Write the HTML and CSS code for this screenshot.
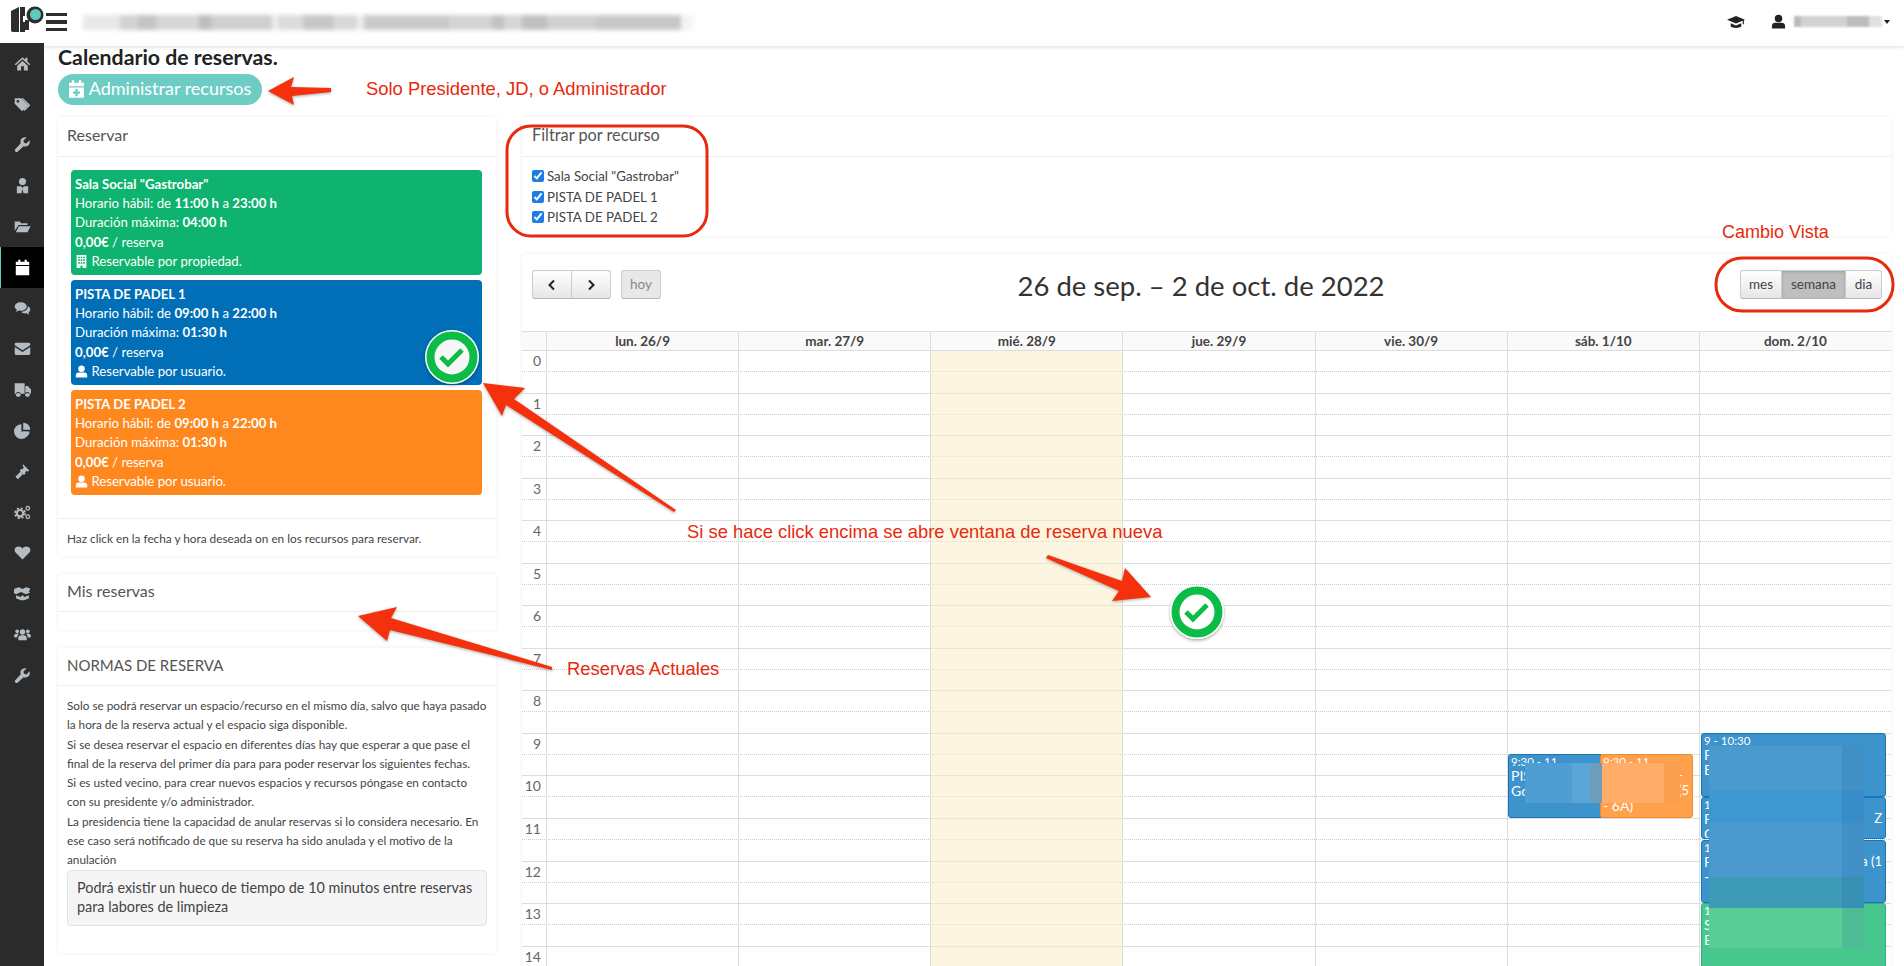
FILE: index.html
```html
<!DOCTYPE html>
<html lang="es">
<head>
    <meta charset="UTF-8">
    <meta name="viewport" content="width=device-width, initial-scale=1.0">
    <title>Calendario de reservas</title>
    <link rel="stylesheet" href="styles.css">
</head>
<body>
    <svg class="sprite" width="0" height="0">
        <symbol id="i-home" viewBox="0 0 24 24"><path d="M12 3 1 13l1.500 1.500L12 6l9.500 8.500L23 13l-4-3.600V4h-3v2.700zM4.500 15v7H10v-6h4v6h5.500v-7L12 8.300z"/></symbol>
        <symbol id="i-tags" viewBox="0 0 24 24"><path fill-rule="evenodd" d="M1 3h9l10 10-8.500 8.500L1 11zm4.500 2.500a2 2 0 1 0 0 4 2 2 0 0 0 0-4z"/><path d="M13 3l10 10-8 8-1.500-1.500 6.500-6.500L10.500 3z"/></symbol>
        <symbol id="i-wrench" viewBox="0 0 24 24"><path d="M22 6l-4.500 4.500-3.300-.8-.9-3.300L17.800 2C14.500 1 11.500 2.200 10 4.500 8.800 6.300 8.800 8.600 9.600 10.400L2 18.500c-1 1.100-1 2.500 0 3.500s2.500 1 3.500 0l8-7.600c1.800.8 4.200.6 6-.6C22 12.200 23 9 22 6z"/></symbol>
        <symbol id="i-usertie" viewBox="0 0 24 24"><circle cx="12" cy="6.500" r="5"/><path d="M4 13h6l2 2.500 2-2.500h6v10h-6.500L12 17l-1.500 6H4z"/></symbol>
        <symbol id="i-folder" viewBox="0 0 24 24"><path d="M1 5h7l2 2.500h9V10H6.500L1 18zM7 11.500h16.500L19 20H2.500z"/></symbol>
        <symbol id="i-calendar" viewBox="0 0 24 24"><path d="M6 1h3v3h6V1h3v3h3.500v4.500h-19V4H6zM2.500 10h19v13h-19z"/></symbol>
        <symbol id="i-comments" viewBox="0 0 24 24"><path d="M9.500 3C4.800 3 1 5.700 1 9c0 1.900 1.200 3.500 3 4.600L3 17l4-2.200c.8.100 1.600.2 2.500.2 4.700 0 8.500-2.700 8.500-6s-3.800-6-8.500-6z"/><path d="M19.500 8.500c.1.200.1.400.1.600 0 4-4.100 7.300-9.600 7.500 1.300 1.400 3.500 2.400 6 2.400.6 0 1.200-.1 1.800-.2l3.700 2-.9-3.300c1.500-1 2.400-2.400 2.400-4 0-2-1.400-3.900-3.500-5z"/></symbol>
        <symbol id="i-envelope" viewBox="0 0 24 24"><path d="M3 4h18a2 2 0 0 1 2 2v1.500l-11 7-11-7V6a2 2 0 0 1 2-2zM1 10l11 7 11-7v9a2 2 0 0 1-2 2H3a2 2 0 0 1-2-2z"/></symbol>
        <symbol id="i-truck" viewBox="0 0 24 24"><path fill-rule="evenodd" d="M1 3h14v15H1zM16 7h3.500L24 12v6h-8zM6 15.500a3.500 3.500 0 1 0 0 7 3.500 3.500 0 0 0 0-7zm13 0a3.500 3.500 0 1 0 0 7 3.500 3.500 0 0 0 0-7z"/><circle cx="6" cy="19" r="2.200"/><circle cx="19" cy="19" r="2.200"/></symbol>
        <symbol id="i-pie" viewBox="0 0 24 24"><path d="M10.500 3v10.500H21A10.500 10.500 0 1 1 10.500 3zM13 1a10 10 0 0 1 10 10H13zM12.800 13l9.300.4a10 10 0 0 1-3 6.600z"/></symbol>
        <symbol id="i-gavel" viewBox="0 0 24 24"><path d="M12.500 1.500l9 9-2 2-1.500-1.500-2.500 2.500 1 1-2.500 2.500-6-6L10.500 8l1 1L14 6.500 12.500 5zM9 12.500l3.500 3.500-7 7L2 19.500z"/></symbol>
        <symbol id="i-cogs" viewBox="0 0 24 24"><circle cx="8.500" cy="13" r="4.500" fill="none" stroke="#b4bcc2" stroke-width="3"/><circle cx="8.500" cy="13" r="7" fill="none" stroke="#b4bcc2" stroke-width="2.500" stroke-dasharray="3 2.500"/><circle cx="19.500" cy="6" r="2.500" fill="none" stroke="#b4bcc2" stroke-width="1.800"/><circle cx="19.500" cy="18" r="2.500" fill="none" stroke="#b4bcc2" stroke-width="1.800"/></symbol>
        <symbol id="i-heart" viewBox="0 0 24 24"><path d="M12 22 2.500 12.500C-.5 9.500.500 4 6 3.500c2.500-.2 4.700 1.200 6 3 1.300-1.800 3.500-3.200 6-3 5.500.5 6.500 6 3.500 9z"/></symbol>
        <symbol id="i-box" viewBox="0 0 24 24"><path d="M1 5l6-2 5 2.500L17 3l6 2-2 4.500 2 1-6 2.500-7-3-7 3-6-2.500 2-1zM3 14.500l6.500 2.500 2.500-3 2.500 3 6.500-2.500V19l-7 2.500h-4L3 19z"/></symbol>
        <symbol id="i-users" viewBox="0 0 24 24"><circle cx="12" cy="8.500" r="3.800"/><circle cx="4.500" cy="7.500" r="2.600"/><circle cx="19.500" cy="7.500" r="2.600"/><path d="M6 20v-3c0-2.500 2-4 4-4h4c2 0 4 1.500 4 4v3zM0 15c0-2 1-4 3-4h3c.4 0 .7.100 1 .2-1.500 1-2.500 2.800-2.500 5H1.500zM24 15c0-2-1-4-3-4h-3c-.4 0-.7.100-1 .2 1.500 1 2.500 2.800 2.500 5h3z"/></symbol>
        <symbol id="i-user" viewBox="0 0 24 24"><circle cx="12" cy="7" r="6"/><path d="M1.500 23v-4c0-3 2.500-5 5-5h11c2.500 0 5 2 5 5v4z"/></symbol>
        <symbol id="i-building" viewBox="0 0 24 24"><path fill-rule="evenodd" d="M3 0h18v24h-7v-4h-4v4H3zM6 3v3h3V3zm4.500 0v3h3V3zM15 3v3h3V3zM6 8v3h3V8zm4.500 0v3h3V8zM15 8v3h3V8zM6 13v3h3v-3zm4.500 0v3h3v-3zm4.500 0v3h3v-3z"/></symbol>
        <symbol id="i-cap" viewBox="0 0 24 24"><path d="M12 4 0 9l12 5 9-3.800V15h1.500V9.500L24 9zM5 13.500V18c2 2.500 12 2.500 14 0v-4.500L12 16.500z"/></symbol>
    </svg>

    <header class="topbar">
        <div class="logo">
            <svg width="36" height="27" viewBox="0 0 36 27">
                <path fill="#2d2d2d" d="M1 5l8-4v25H3c-1.500 0-2-1-2-2z"/>
                <path fill="#2d2d2d" d="M10 1h5v9h-2v6h2v10h-5z"/>
                <path fill="#2d2d2d" d="M15 14h4v10h-4z"/>
                <circle fill="#2d2d2d" cx="25" cy="9" r="8.500"/>
                <circle fill="#5fc8c0" cx="25.500" cy="8.500" r="5.500"/>
            </svg>
        </div>
        <div class="hamburger"><span></span><span></span><span></span></div>
        <div class="blur-title"></div>
        <div class="topbar-right">
            <svg class="top-icon cap"><use href="#i-cap"/></svg>
            <svg class="top-icon person"><use href="#i-user"/></svg>
            <div class="blur-name"></div>
            <span class="caret"></span>
        </div>
    </header>

    <div class="layout">
        <aside class="sidebar">
            <a class="side-item" href="#"><svg><use href="#i-home"/></svg></a>
            <a class="side-item" href="#"><svg><use href="#i-tags"/></svg></a>
            <a class="side-item" href="#"><svg><use href="#i-wrench"/></svg></a>
            <a class="side-item" href="#"><svg><use href="#i-usertie"/></svg></a>
            <a class="side-item" href="#"><svg><use href="#i-folder"/></svg></a>
            <a class="side-item active" href="#"><svg><use href="#i-calendar"/></svg></a>
            <a class="side-item" href="#"><svg><use href="#i-comments"/></svg></a>
            <a class="side-item" href="#"><svg><use href="#i-envelope"/></svg></a>
            <a class="side-item" href="#"><svg><use href="#i-truck"/></svg></a>
            <a class="side-item" href="#"><svg><use href="#i-pie"/></svg></a>
            <a class="side-item" href="#"><svg><use href="#i-gavel"/></svg></a>
            <a class="side-item" href="#"><svg><use href="#i-cogs"/></svg></a>
            <a class="side-item" href="#"><svg><use href="#i-heart"/></svg></a>
            <a class="side-item" href="#"><svg><use href="#i-box"/></svg></a>
            <a class="side-item" href="#"><svg><use href="#i-users"/></svg></a>
            <a class="side-item" href="#"><svg><use href="#i-wrench"/></svg></a>
        </aside>

        <main class="content">
            <h1 class="page-title">Calendario de reservas.</h1>
            <a class="btn-resources" href="#">
                <svg viewBox="0 0 24 24"><use href="#i-calendar"/><path class="plus" d="M10.500 12h3v3h3v3h-3v3h-3v-3h-3v-3h3z"/></svg>
                Administrar recursos
            </a>

            <div class="columns">
                <div class="col-left">
                    <section class="panel">
                        <div class="panel-head tall">Reservar</div>
                        <div class="resources">
                            <div class="resource green">
                                <strong>Sala Social "Gastrobar"</strong>
                                <div>Horario hábil: de <strong>11:00 h</strong> a <strong>23:00 h</strong></div>
                                <div>Duración máxima: <strong>04:00 h</strong></div>
                                <div><strong>0,00€</strong> / reserva</div>
                                <div><svg><use href="#i-building"/></svg> Reservable por propiedad.</div>
                            </div>
                            <div class="resource blue">
                                <strong>PISTA DE PADEL 1</strong>
                                <div>Horario hábil: de <strong>09:00 h</strong> a <strong>22:00 h</strong></div>
                                <div>Duración máxima: <strong>01:30 h</strong></div>
                                <div><strong>0,00€</strong> / reserva</div>
                                <div><svg><use href="#i-user"/></svg> Reservable por usuario.</div>
                            </div>
                            <div class="resource orange">
                                <strong>PISTA DE PADEL 2</strong>
                                <div>Horario hábil: de <strong>09:00 h</strong> a <strong>22:00 h</strong></div>
                                <div>Duración máxima: <strong>01:30 h</strong></div>
                                <div><strong>0,00€</strong> / reserva</div>
                                <div><svg><use href="#i-user"/></svg> Reservable por usuario.</div>
                            </div>
                        </div>
                        <div class="panel-foot">Haz click en la fecha y hora deseada on en los recursos para reservar.</div>
                    </section>

                    <section class="panel">
                        <div class="panel-head">Mis reservas</div>
                        <div class="empty-body"></div>
                    </section>

                    <section class="panel">
                        <div class="panel-head caps">NORMAS DE RESERVA</div>
                        <div class="rules">
                            <p>Solo se podrá reservar un espacio/recurso en el mismo día, salvo que haya pasado la hora de la reserva actual y el espacio siga disponible.</p>
                            <p>Si se desea reservar el espacio en diferentes días hay que esperar a que pase el final de la reserva del primer día para para poder reservar los siguientes fechas.</p>
                            <p>Si es usted vecino, para crear nuevos espacios y recursos póngase en contacto con su presidente y/o administrador.</p>
                            <p>La presidencia tiene la capacidad de anular reservas si lo considera necesario. En ese caso será notificado de que su reserva ha sido anulada y el motivo de la anulación</p>
                            <div class="well">Podrá existir un hueco de tiempo de 10 minutos entre reservas para labores de limpieza</div>
                        </div>
                    </section>
                </div>

                <div class="col-right">
                    <section class="panel">
                        <div class="panel-head tall">Filtrar por recurso</div>
                        <div class="filters">
                            <label><input type="checkbox" checked> Sala Social "Gastrobar"</label>
                            <label><input type="checkbox" checked> PISTA DE PADEL 1</label>
                            <label><input type="checkbox" checked> PISTA DE PADEL 2</label>
                        </div>
                    </section>

                    <section class="panel calendar">
                        <div class="cal-toolbar">
                            <div class="cal-left">
                                <div class="btn-group">
                                    <button class="cal-btn arrow"><svg viewBox="0 0 12 12"><path d="M8 1.500 3.500 6 8 10.500"/></svg></button>
                                    <button class="cal-btn arrow"><svg viewBox="0 0 12 12"><path d="M4 1.500 8.500 6 4 10.500"/></svg></button>
                                </div>
                                <button class="cal-btn today-btn">hoy</button>
                            </div>
                            <h2 class="cal-title">26 de sep. – 2 de oct. de 2022</h2>
                            <div class="btn-group">
                                <button class="cal-btn view-month">mes</button>
                                <button class="cal-btn view-week pressed">semana</button>
                                <button class="cal-btn view-day">dia</button>
                            </div>
                        </div>

                        <div class="cal-head">
                            <div></div>
                            <div>lun. 26/9</div>
                            <div>mar. 27/9</div>
                            <div>mié. 28/9</div>
                            <div>jue. 29/9</div>
                            <div>vie. 30/9</div>
                            <div>sáb. 1/10</div>
                            <div>dom. 2/10</div>
                        </div>

                        <div class="cal-body">
                            <div class="cal-hour"><span>0</span></div>
                            <div class="cal-hour"><span>1</span></div>
                            <div class="cal-hour"><span>2</span></div>
                            <div class="cal-hour"><span>3</span></div>
                            <div class="cal-hour"><span>4</span></div>
                            <div class="cal-hour"><span>5</span></div>
                            <div class="cal-hour"><span>6</span></div>
                            <div class="cal-hour"><span>7</span></div>
                            <div class="cal-hour"><span>8</span></div>
                            <div class="cal-hour"><span>9</span></div>
                            <div class="cal-hour"><span>10</span></div>
                            <div class="cal-hour"><span>11</span></div>
                            <div class="cal-hour"><span>12</span></div>
                            <div class="cal-hour"><span>13</span></div>
                            <div class="cal-hour"><span>14</span></div>

                            <div class="cal-cols">
                                <div class="cal-col"></div>
                                <div class="cal-col"></div>
                                <div class="cal-col today"></div>
                                <div class="cal-col"></div>
                                <div class="cal-col"></div>
                                <div class="cal-col"></div>
                                <div class="cal-col"></div>
                            </div>

                            <div class="event ev-sat-blue"><small>9:30 - 11</small>PIS<br>Go</div>
                            <div class="event ev-sat-orange"><small>9:30 - 11</small><span class="ev-right">-<br>(5</span><br><br>- 6A)</div>
                            <div class="event ev-sun-1"><small>9 - 10:30</small>P<br>E</div>
                            <div class="event ev-sun-2"><small>10</small>P<span class="ev-right">Z</span><br>C</div>
                            <div class="event ev-sun-3"><small>11</small>P<span class="ev-right">a (1</span><br>-</div>
                            <div class="event ev-sun-4"><small>13</small>S<br>B</div>
                            <div class="mosaic mosaic-sat"></div>
                            <div class="mosaic mosaic-sun"></div>
                        </div>
                    </section>
                </div>
            </div>
        </main>
    </div>

    <!-- anotaciones encima de la captura -->
    <div class="annotations">
        <svg class="marks" width="1904" height="966" viewBox="0 0 1904 966">
            <defs>
                <filter id="soft" x="-20%" y="-20%" width="140%" height="140%">
                    <feDropShadow dx="0" dy="1.500" stdDeviation="1.500" flood-color="#000" flood-opacity=".35"/>
                </filter>
            </defs>
            <rect class="ring" x="507" y="126" width="200" height="110" rx="24"/>
            <rect class="ring" x="1716" y="258" width="177" height="53" rx="26"/>

            <polygon class="arrow-shape" points="268,91 294,77 291,87 331,88 331,92 292,96 294,105"/>
            <polygon class="arrow-shape" points="483,383 525,388 514,399 676,510 674,512 506,405 502,416"/>
            <polygon class="arrow-shape" points="358,616 397,607 391,618 552,667 552,670 390,630 387,641"/>
            <polygon class="arrow-shape" points="1048,555 1122,581 1125,568 1151,597 1112,601 1119,591 1046,558"/>

            <g class="check" transform="translate(452 357)">
                <circle r="27" fill="#fff" filter="url(#soft)"/>
                <circle r="21.500" fill="#f6f8f8" stroke="#0cbc46" stroke-width="8"/>
                <path d="M-11 0l7 7 14-14" fill="none" stroke="#0cbc46" stroke-width="5"/>
            </g>
            <g class="check" transform="translate(1197 612)">
                <circle r="27" fill="#fff" filter="url(#soft)"/>
                <circle r="21.500" fill="#fff" stroke="#0cbc46" stroke-width="8"/>
                <path d="M-11 0l7 7 14-14" fill="none" stroke="#0cbc46" stroke-width="5"/>
            </g>
        </svg>
        <div class="note note-admin">Solo Presidente, JD, o Administrador</div>
        <div class="note note-view">Cambio Vista</div>
        <div class="note note-click">Si se hace click encima se abre ventana de reserva nueva</div>
        <div class="note note-current">Reservas Actuales</div>
    </div>
</body>
</html>
```

FILE: styles.css
```css
/* Base */
html, body {
    height: 966px;
    overflow: hidden;
}

body {
    margin: 0;
    position: relative;
    background-color: #fff;
    color: #444;
    font-family: Lato, "Open Sans", sans-serif;
    font-size: 14px;
}

.sprite {
    position: absolute;
}

/* Barra superior */
.topbar {
    height: 46px;
    display: flex;
    align-items: center;
    background-color: #fff;
    box-shadow: 0 1px 4px rgba(0, 0, 0, 0.14);
    position: relative;
    z-index: 2;
}

.logo {
    margin-left: 10px;
    width: 36px;
    height: 27px;
    margin-top: -7px;
}

.hamburger {
    width: 21px;
    display: flex;
    flex-direction: column;
    gap: 4px;
    margin-top: -2px;
}

.hamburger span {
    height: 3.500px;
    background-color: #2d2d2d;
}

.blur-title {
    width: 610px;
    height: 15px;
    margin-left: 16px;
    margin-top: -1px;
    filter: blur(2px);
    background:
        linear-gradient(90deg, #e8e8e8 0 6%, #d2d2d2 6% 9%, #c4c4c4 9% 12%, #d6d6d6 12% 19%, #bdbdbd 19% 21%, #cfcfcf 21% 31%, #eeeeee 31% 32%, #dcdcdc 32% 36%, #c6c6c6 36% 41%, #d8d8d8 41% 45%, #ededed 45% 46%, #cacaca 46% 60%, #d4d4d4 60% 67%, #c2c2c2 67% 69%, #d6d6d6 69% 72%, #c0c0c0 72% 76%, #d0d0d0 76% 84%, #c8c8c8 84% 98%, #f4f4f4 98% 100%);
}

.topbar-right {
    margin-left: auto;
    display: flex;
    align-items: center;
    padding-right: 14px;
    margin-top: -3px;
}

.top-icon {
    fill: #222;
}

.top-icon.cap {
    width: 18px;
    height: 18px;
    margin-right: 26px;
}

.top-icon.person {
    width: 15px;
    height: 15px;
    margin-right: 8px;
}

.blur-name {
    width: 88px;
    height: 11px;
    filter: blur(1px);
    background: linear-gradient(90deg, #bbb 0 8%, #d2d2d2 8% 60%, #bdbdbd 60% 85%, #e0e0e0 85% 100%);
}

.caret {
    margin-left: 2px;
    border-left: 3.500px solid transparent;
    border-right: 3.500px solid transparent;
    border-top: 4px solid #222;
}

/* Estructura */
.layout {
    display: flex;
    align-items: stretch;
    margin-top: -3px;
}

.sidebar {
    width: 44px;
    flex: none;
    height: 923px;
    background-color: #2b2b2b;
    display: flex;
    flex-direction: column;
    position: relative;
    z-index: 3;
}

.side-item {
    height: 40.800px;
    flex: none;
    display: flex;
    align-items: center;
    justify-content: center;
    fill: #b4bcc2;
}

.side-item svg {
    width: 17px;
    height: 17px;
}

.side-item.active {
    background-color: #000;
    fill: #fff;
    box-shadow: inset 1px 0 0 #5fc8c0;
}

.content {
    flex: 1;
    min-width: 0;
    padding: 2px 13px 0 14px;
}

.page-title {
    margin: 0;
    height: 29px;
    line-height: 24px;
    font-size: 21.300px;
    font-weight: 700;
    color: #222;
}

.btn-resources {
    box-sizing: border-box;
    width: 204px;
    height: 31px;
    padding: 0 2px 3px 0;
    display: flex;
    align-items: center;
    justify-content: center;
    gap: 3px;
    border-radius: 16px;
    background-color: #6dcdc5;
    color: #fff;
    font-size: 18px;
    text-decoration: none;
}

.btn-resources svg {
    width: 19px;
    height: 20px;
    margin-top: 2px;
    fill: #fff;
}

.btn-resources .plus {
    fill: #6dcdc5;
}

.columns {
    display: grid;
    grid-template-columns: 438px 1fr;
    column-gap: 26px;
    margin-top: 12px;
}

/* Paneles */
.panel {
    background-color: #fff;
    border-radius: 3px;
    box-shadow: 0 0 5px rgba(0, 0, 0, 0.07);
    margin-bottom: 18px;
}

.panel-head {
    box-sizing: border-box;
    height: 38px;
    line-height: 34px;
    padding-left: 9px;
    border-bottom: 1px solid #eee;
    font-size: 16px;
    color: #555;
}

.panel-head.tall {
    height: 40px;
    line-height: 36px;
}

.col-right .panel-head {
    padding-left: 10px;
    font-size: 16.300px;
}

.panel-head.caps {
    font-size: 15px;
}

/* Recursos */
.resources {
    display: flex;
    flex-direction: column;
    gap: 5px;
    padding: 13px 14px 23px 13px;
    border-bottom: 1px solid #eee;
}

.resource {
    box-sizing: border-box;
    height: 105px;
    padding: 5px 4px 3px;
    border-radius: 4px;
    color: #fff;
    line-height: 19.200px;
    font-size: 13.200px;
}

.resource svg {
    width: 13px;
    height: 13px;
    fill: #fff;
    vertical-align: -2px;
}

.green {
    background-color: #0db36e;
}

.blue {
    background-color: #006fb8;
}

.orange {
    background-color: #ff881e;
}

.panel-foot {
    height: 37px;
    line-height: 39px;
    padding-left: 9px;
    font-size: 11.800px;
    color: #444;
}

.empty-body {
    height: 18px;
}

/* Normas */
.rules {
    padding: 10px 9px 27px;
    font-size: 11.750px;
    line-height: 19.300px;
    color: #444;
}

.rules p {
    margin: 0;
}

.well {
    padding: 7px 9px 9px;
    background-color: #f5f5f5;
    border: 1px solid #e3e3e3;
    border-radius: 4px;
    font-size: 14.400px;
    line-height: 19px;
}

/* Filtro */
.filters {
    padding: 9px 10px 8.500px;
    font-size: 13.300px;
}

.filters label {
    display: flex;
    align-items: center;
    gap: 3px;
    height: 20.500px;
}

.filters input {
    margin: 0;
    width: 12px;
    height: 12px;
    accent-color: #1a7ee6;
}

/* Calendario */
.calendar {
    padding-top: 16px;
    margin-bottom: 0;
}

.cal-toolbar {
    display: flex;
    justify-content: space-between;
    align-items: center;
    height: 29px;
    padding: 0 9px 0 11px;
    margin-bottom: 32px;
}

.cal-left {
    display: flex;
    gap: 11px;
}

.btn-group {
    display: flex;
}

.cal-btn {
    height: 29px;
    padding: 0 0 2px;
    border: 1px solid #ccc;
    border-bottom-color: #b5b5b5;
    margin-left: -1px;
    background: linear-gradient(#fff, #e6e6e6);
    color: #444;
    font-family: inherit;
    font-size: 13.500px;
}

.btn-group .cal-btn:first-child {
    border-radius: 3px 0 0 3px;
}

.btn-group .cal-btn:last-child {
    border-radius: 0 3px 3px 0;
}

.cal-btn.arrow {
    width: 40px;
    padding: 0;
    display: flex;
    align-items: center;
    justify-content: center;
}

.cal-btn.arrow svg {
    width: 12px;
    height: 12px;
    fill: none;
    stroke: #222;
    stroke-width: 2;
}

.today-btn {
    width: 40px;
    border-radius: 3px;
    background: #e8e8e8;
    color: #888;
}

.view-month {
    width: 42px;
}

.view-week {
    width: 65px;
}

.view-day {
    width: 37px;
}

.cal-btn.pressed {
    background: #bfbfbf;
    box-shadow: inset 0 1px 3px rgba(0, 0, 0, 0.18);
}

.cal-title {
    margin: 2px 0 0;
    font-size: 27.500px;
    font-weight: 400;
    color: #333;
}

.cal-head {
    display: grid;
    grid-template-columns: 24px repeat(7, 1fr);
    height: 18px;
    border-top: 1px solid #ddd;
    border-bottom: 1px solid #ddd;
    background-color: #fafafa;
    line-height: 18px;
    text-align: center;
    font-size: 13.500px;
    font-weight: 700;
    color: #444;
}

.cal-head div + div {
    border-left: 1px solid #ddd;
}

.cal-body {
    position: relative;
}

.cal-hour {
    position: relative;
    box-sizing: border-box;
    height: 42.550px;
    border-bottom: 1px solid #ddd;
}

.cal-hour span {
    display: block;
    width: 19px;
    text-align: right;
    line-height: 19px;
    font-size: 14px;
    color: #666;
}

.cal-hour::after {
    content: "";
    position: absolute;
    left: 0;
    right: 0;
    top: 20px;
    border-top: 1px dotted #ccc;
}

.cal-cols {
    position: absolute;
    top: 0;
    bottom: 0;
    left: 24px;
    right: 0;
    display: grid;
    grid-template-columns: repeat(7, 1fr);
}

.cal-col {
    border-left: 1px solid #ddd;
}

.cal-col.today {
    background-color: rgba(250, 238, 200, 0.55);
}

/* Eventos */
.event {
    position: absolute;
    box-sizing: border-box;
    overflow: hidden;
    padding: 0 2px;
    border: 1px solid #1a76b5;
    border-radius: 3px;
    background-color: #3d93cc;
    color: #fff;
    font-size: 14px;
    line-height: 15px;
}

.event small {
    display: block;
    font-size: 11.500px;
    line-height: 13px;
}

.ev-right {
    position: absolute;
    right: 3px;
    font-size: 13px;
}

.ev-sat-blue {
    left: 986px;
    top: 403px;
    width: 95px;
    height: 64px;
}

.ev-sat-orange {
    left: 1078px;
    top: 403px;
    width: 93px;
    height: 64px;
    background-color: #ffa04d;
    border-color: #f08a30;
}

.ev-sun-1 {
    left: 1179px;
    top: 382px;
    width: 185px;
    height: 64px;
}

.ev-sun-2 {
    left: 1179px;
    top: 446px;
    width: 185px;
    height: 42px;
}

.ev-sun-3 {
    left: 1179px;
    top: 489px;
    width: 185px;
    height: 63px;
}

.ev-sun-4 {
    left: 1179px;
    top: 552px;
    width: 185px;
    height: 80px;
    background-color: #47c78e;
    border-color: #2eaf75;
}

/* Zonas pixeladas */
.mosaic-sat {
    position: absolute;
    left: 1003px;
    top: 412px;
    width: 155px;
    height: 40px;
    background: linear-gradient(90deg, #4f9dd2 0 30%, #5aa6d8 30% 42%, #6d9dbb 42% 50%, #ffad68 50% 90%, #f9a04f 90% 100%);
}

.mosaic-sun {
    position: absolute;
    left: 1187px;
    top: 395px;
    width: 155px;
    height: 202px;
    background:
        linear-gradient(90deg, rgba(0, 0, 0, 0) 0 86%, rgba(20, 90, 150, 0.16) 86% 100%),
        linear-gradient(#4a9ace 0 22%, #3f97d2 22% 38%, #4a9ad0 38% 65%, #3e9bb8 65% 80%, #59cd96 80% 100%);
}

/* Anotaciones */
.annotations {
    position: absolute;
    top: 0;
    left: 0;
    width: 1904px;
    height: 966px;
    z-index: 5;
    pointer-events: none;
}

.marks {
    position: absolute;
    top: 0;
    left: 0;
}

.ring {
    fill: none;
    stroke: #e8290c;
    stroke-width: 3;
}

.arrow-shape {
    fill: #f5300c;
    filter: drop-shadow(0 1px 1.500px rgba(0, 0, 0, 0.35));
}

.note {
    position: absolute;
    color: #e8290c;
    font-family: "Liberation Sans", Arial, sans-serif;
    font-size: 18.400px;
    line-height: 22px;
    white-space: nowrap;
}

.note-admin {
    left: 366px;
    top: 78px;
}

.note-view {
    left: 1722px;
    top: 221px;
    font-size: 18px;
}

.note-click {
    left: 687px;
    top: 521px;
}

.note-current {
    left: 567px;
    top: 658px;
}
```
